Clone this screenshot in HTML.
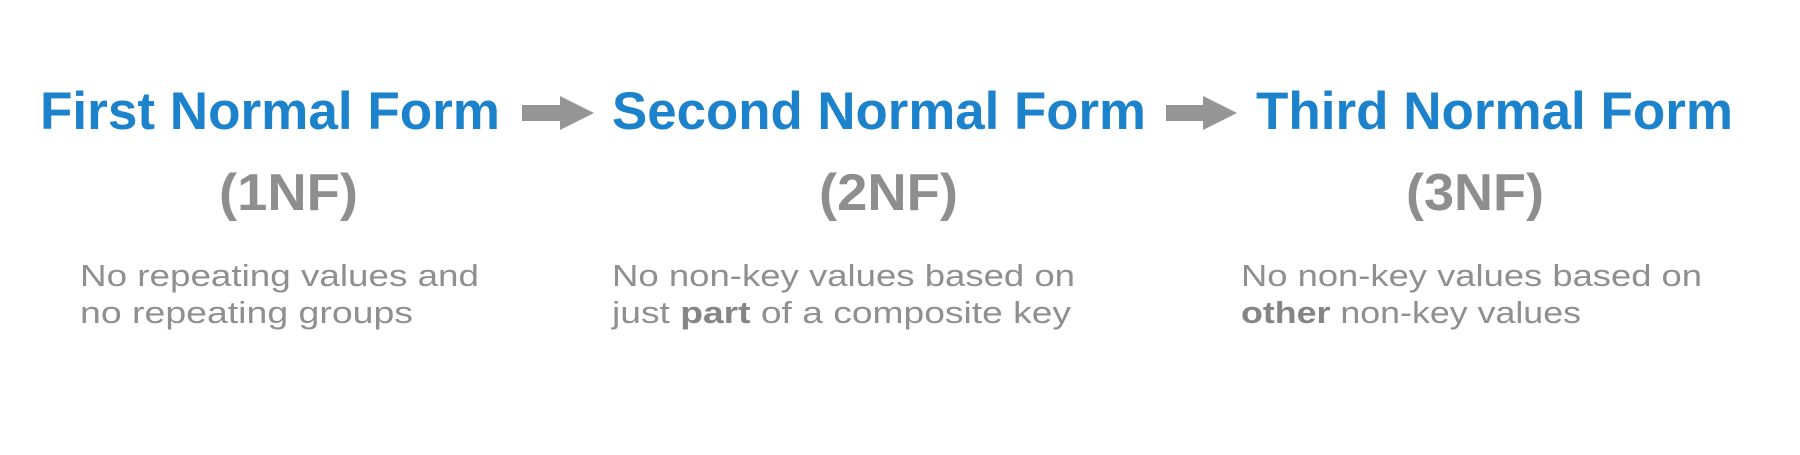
<!DOCTYPE html>
<html><head><meta charset="utf-8"><style>
html,body{margin:0;padding:0;background:#fff;width:1800px;height:455px;overflow:hidden}
svg{display:block}
.t{font-family:"Liberation Sans",sans-serif;font-weight:bold;font-size:53px;fill:#1b82cb}
.p{font-family:"Liberation Sans",sans-serif;font-weight:bold;font-size:52px;fill:#8e8e8e}
.d{font-family:"Liberation Sans",sans-serif;font-size:31px;fill:#8f8f8f}
.b{font-weight:bold;fill:#858585}
</style></head><body>
<svg width="1800" height="455" viewBox="0 0 1800 455">
<text class="t" x="40" y="129" textLength="460" lengthAdjust="spacingAndGlyphs">First Normal Form</text>
<text class="t" x="612" y="129" textLength="534" lengthAdjust="spacingAndGlyphs">Second Normal Form</text>
<text class="t" x="1256" y="129" textLength="477" lengthAdjust="spacingAndGlyphs">Third Normal Form</text>
<polygon points="522,105 560,105 560,96 594,113 560,130 560,121 522,121" fill="#959595"/>
<polygon points="1166,105 1203,105 1203,96 1237,113 1203,130 1203,121 1166,121" fill="#959595"/>
<text class="p" x="219" y="210" textLength="139" lengthAdjust="spacingAndGlyphs">(1NF)</text>
<text class="p" x="819" y="210" textLength="139" lengthAdjust="spacingAndGlyphs">(2NF)</text>
<text class="p" x="1406" y="210" textLength="138" lengthAdjust="spacingAndGlyphs">(3NF)</text>
<text class="d" x="80" y="286" textLength="399" lengthAdjust="spacingAndGlyphs">No repeating values and</text>
<text class="d" x="80" y="323" textLength="333" lengthAdjust="spacingAndGlyphs">no repeating groups</text>
<text class="d" x="612" y="286" textLength="463" lengthAdjust="spacingAndGlyphs">No non-key values based on</text>
<text class="d" x="612" y="323" textLength="459" lengthAdjust="spacingAndGlyphs">just <tspan class="b">part</tspan> of a composite key</text>
<text class="d" x="1241" y="286" textLength="461" lengthAdjust="spacingAndGlyphs">No non-key values based on</text>
<text class="d" x="1241" y="323" textLength="340" lengthAdjust="spacingAndGlyphs"><tspan class="b">other</tspan> non-key values</text>
</svg>
</body></html>
